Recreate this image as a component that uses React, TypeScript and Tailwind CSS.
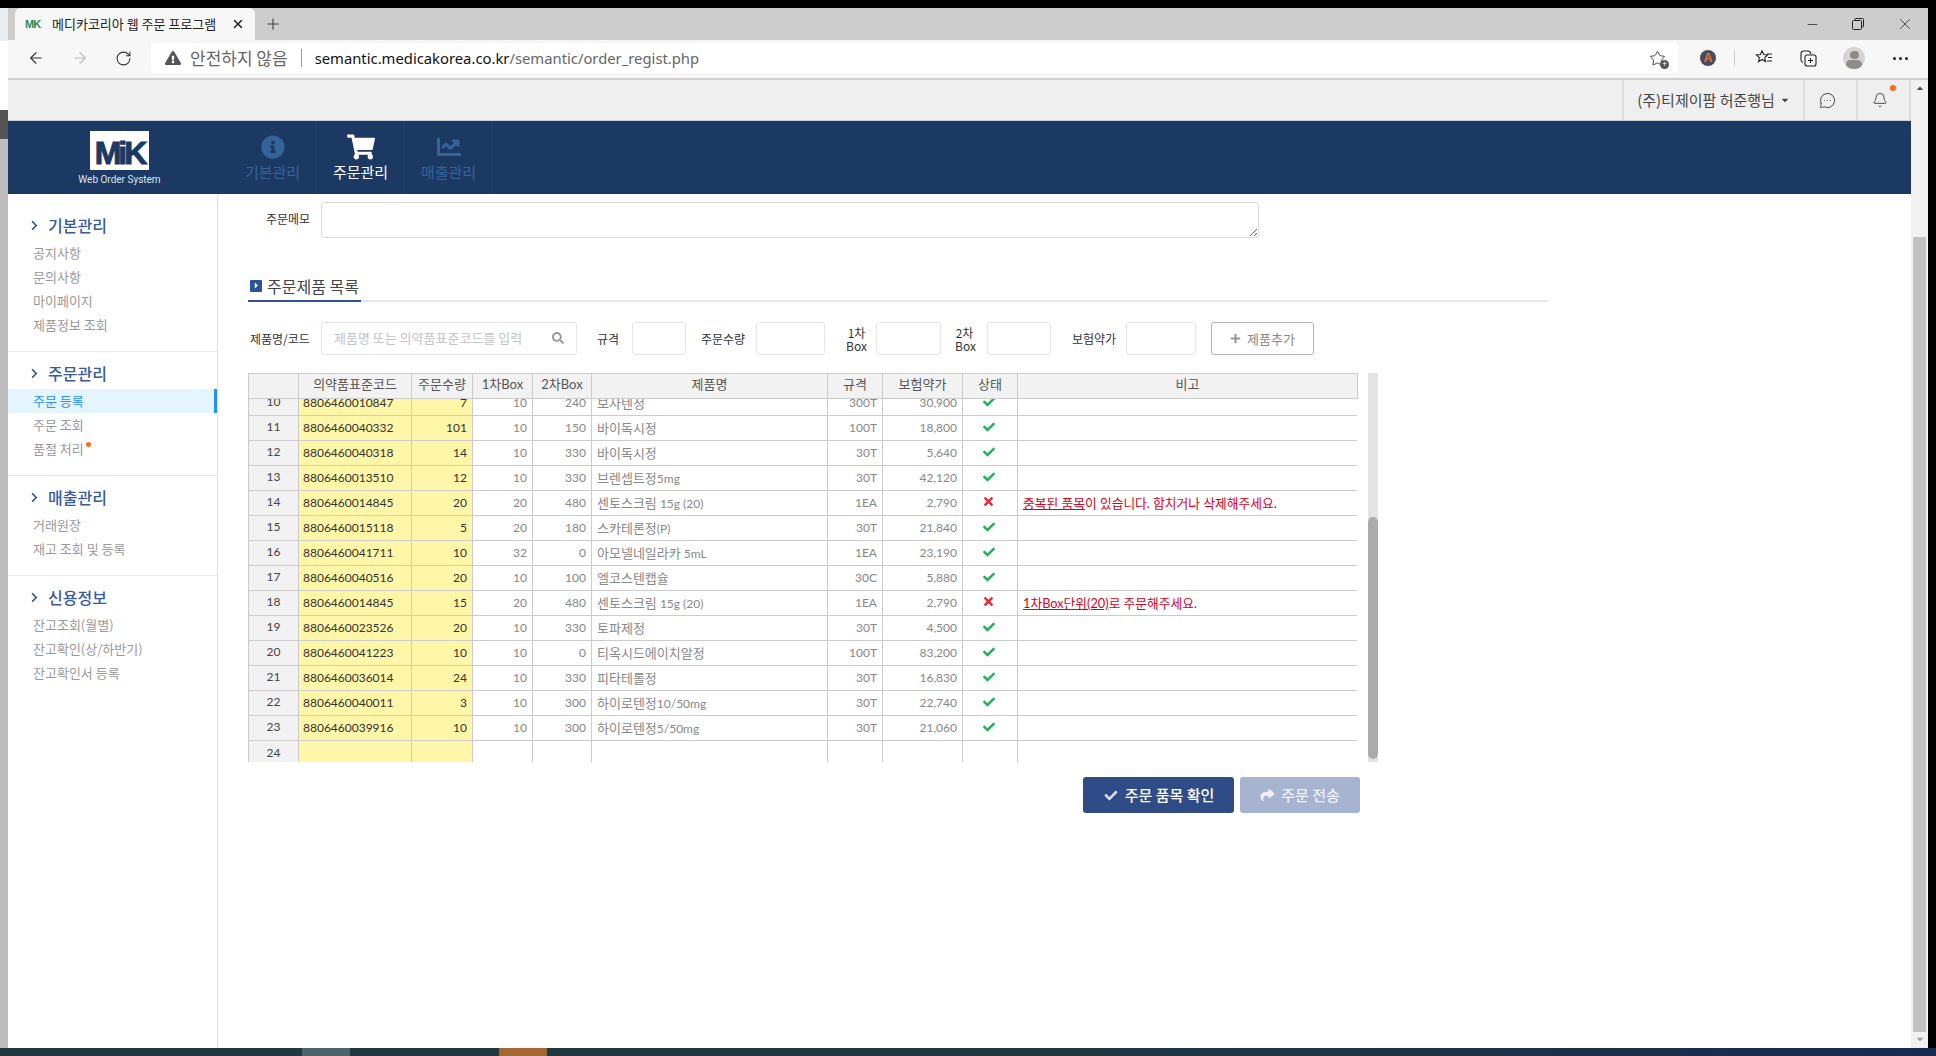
import { ArrowLeft, ArrowRight, Bell, MessageCircleMore, Minus, Plus, RotateCw, Star, X } from "lucide-react";
import { FaCaretDown, FaCaretUp, FaChartLine, FaCheck, FaChevronRight, FaExclamationTriangle, FaInfoCircle, FaPlus, FaSearch, FaShare, FaShoppingCart, FaTimes } from "react-icons/fa";

const menu = [
  { title: "기본관리", items: ["공지사항", "문의사항", "마이페이지", "제품정보 조회"] },
  { title: "주문관리", items: ["주문 등록", "주문 조회", "품절 처리"] },
  { title: "매출관리", items: ["거래원장", "재고 조회 및 등록"] },
  { title: "신용정보", items: ["잔고조회(월별)", "잔고확인(상/하반기)", "잔고확인서 등록"] },
];

const rows = [
  { no: 10, code: "8806460010847", qty: "7", box1: "10", box2: "240", name: "보사텐정", spec: "", unit: "300T", price: "30,900", ok: true },
  { no: 11, code: "8806460040332", qty: "101", box1: "10", box2: "150", name: "바이독시정", spec: "", unit: "100T", price: "18,800", ok: true },
  { no: 12, code: "8806460040318", qty: "14", box1: "10", box2: "330", name: "바이독시정", spec: "", unit: "30T", price: "5,640", ok: true },
  { no: 13, code: "8806460013510", qty: "12", box1: "10", box2: "330", name: "브렌셉트정", spec: "5mg", unit: "30T", price: "42,120", ok: true },
  { no: 14, code: "8806460014845", qty: "20", box1: "20", box2: "480", name: "센토스크림", spec: " 15g (20)", unit: "1EA", price: "2,790", ok: false, link: "중복된 품목", note: "이 있습니다. 합치거나 삭제해주세요." },
  { no: 15, code: "8806460015118", qty: "5", box1: "20", box2: "180", name: "스카테론정", spec: "(P)", unit: "30T", price: "21,840", ok: true },
  { no: 16, code: "8806460041711", qty: "10", box1: "32", box2: "0", name: "아모넬네일라카", spec: " 5mL", unit: "1EA", price: "23,190", ok: true },
  { no: 17, code: "8806460040516", qty: "20", box1: "10", box2: "100", name: "엘코스텐캡슐", spec: "", unit: "30C", price: "5,880", ok: true },
  { no: 18, code: "8806460014845", qty: "15", box1: "20", box2: "480", name: "센토스크림", spec: " 15g (20)", unit: "1EA", price: "2,790", ok: false, link: "1차Box단위(20)", note: "로 주문해주세요." },
  { no: 19, code: "8806460023526", qty: "20", box1: "10", box2: "330", name: "토파제정", spec: "", unit: "30T", price: "4,500", ok: true },
  { no: 20, code: "8806460041223", qty: "10", box1: "10", box2: "0", name: "티옥시드에이치알정", spec: "", unit: "100T", price: "83,200", ok: true },
  { no: 21, code: "8806460036014", qty: "24", box1: "10", box2: "330", name: "피타테롤정", spec: "", unit: "30T", price: "16,830", ok: true },
  { no: 22, code: "8806460040011", qty: "3", box1: "10", box2: "300", name: "하이로텐정", spec: "10/50mg", unit: "30T", price: "22,740", ok: true },
  { no: 23, code: "8806460039916", qty: "10", box1: "10", box2: "300", name: "하이로텐정", spec: "5/50mg", unit: "30T", price: "21,060", ok: true },
];

function Cols() {
  return (
    <colgroup>
      <col className="w-[50px]" />
      <col className="w-[113px]" />
      <col className="w-[61px]" />
      <col className="w-[60px]" />
      <col className="w-[59px]" />
      <col className="w-[236px]" />
      <col className="w-[55px]" />
      <col className="w-[80px]" />
      <col className="w-[55px]" />
      <col className="w-[340px]" />
    </colgroup>
  );
}

function BrowserChrome() {
  return (
    <>
      {/* 탭 */}
      <div className="h-[32px] bg-[#cdcdcd] flex items-end pl-[7px] text-[#222] relative">
        <div className="w-[240px] h-[32px] bg-[#f7f7f7] rounded-t-[6px] flex items-center pl-[10px]">
          <span className="w-[16px] text-[11px] font-bold leading-none text-[#1f8f55] tracking-[-1px] font-['Liberation_Sans',sans-serif]">MK</span>
          <span className="ml-[11px] text-[13px] whitespace-nowrap">메디카코리아 웹 주문 프로그램</span>
          <X className="ml-[15px] w-[14px] h-[14px]" strokeWidth={2.5} />
        </div>
        <Plus className="ml-[9px] mb-[7px] w-[18px] h-[18px] text-[#444]" strokeWidth={1.5} />
        <div className="ml-auto flex items-center h-[32px] pr-[14px] gap-[32px] text-[#222]">
          <Minus className="w-[15px] h-[15px]" strokeWidth={1.2} />
          <svg width="12" height="12" viewBox="0 0 12 12" fill="none" stroke="#222" strokeWidth="1">
            <rect x="0.5" y="2.5" width="9" height="9" rx="1" />
            <path d="M3 2.5V1.5a1 1 0 0 1 1-1h6.500a1 1 0 0 1 1 1V8a1 1 0 0 1-1 1h-1" />
          </svg>
          <X className="w-[18px] h-[18px]" strokeWidth={1} />
        </div>
      </div>
      {/* 주소창 */}
      <div className="h-[40px] bg-[#f7f7f7] border-b-2 border-[#cfcfcf] flex items-center text-[#333] pb-[2px]">
        <ArrowLeft className="ml-[19px] w-[18px] h-[18px]" strokeWidth={1.5} />
        <ArrowRight className="ml-[26px] w-[18px] h-[18px] text-[#bbb]" strokeWidth={1.5} />
        <RotateCw className="ml-[26px] w-[17px] h-[17px]" strokeWidth={1.5} />
        <div className="ml-[19px] w-[1527px] h-[30px] bg-white rounded-[4px] flex items-center pl-[14px]">
          <FaExclamationTriangle className="w-[16px] h-[16px] text-[#555]" />
          <span className="ml-[9px] text-[17px] text-[#666] whitespace-nowrap">안전하지 않음</span>
          <span className="ml-[13px] w-px h-[18px] bg-[#999]" />
          <span className="ml-[13px] text-[14.8px] font-['Noto_Sans',sans-serif] whitespace-nowrap text-[#666]">
            <span className="text-[#111]">semantic.medicakorea.co.kr</span>/semantic/order_regist.php
          </span>
          <div className="ml-auto mr-[12px] relative">
            <Star className="w-[17px] h-[17px] text-[#444]" strokeWidth={1.4} />
            <span className="absolute -right-[3px] -bottom-[2px] w-[9px] h-[9px] rounded-full bg-[#555] text-white text-[9px] leading-[8px] text-center">+</span>
          </div>
        </div>
        <div className="ml-[22px] w-[16px] h-[16px] rounded-full bg-[#4a4a5a] text-[#e8743b] text-[12px] font-bold leading-[16px] text-center font-['Liberation_Sans',sans-serif]">A</div>
        <span className="ml-[18px] w-px h-[16px] bg-[#ccc]" />
        <svg className="ml-[20px]" width="18" height="18" viewBox="0 0 18 18" fill="none" stroke="#222" strokeWidth="1.1">
          <path d="M7 1.800l1.700 3.700 4 .4-3 2.700.9 4-3.600-2.100-3.500 2.100.9-4-3-2.700 4-.4z" />
          <path d="M12 5h5M13 8.500h4M12 12h5" />
        </svg>
        <svg className="ml-[26px]" width="18" height="18" viewBox="0 0 18 18" fill="none" stroke="#222" strokeWidth="1.100">
          <rect x="6" y="6" width="11" height="11" rx="2" />
          <path d="M11.500 9v5M9 11.500h5" />
          <path d="M4 13.500C2.500 13 2 12 2 11V4.500C2 3 3 2 4.500 2H9c1.500 0 2.500 1 3 3" />
        </svg>
        <div className="ml-[26px] w-[22px] h-[22px] rounded-full bg-[#d6d5d2] overflow-hidden flex flex-col items-center">
          <span className="mt-[4px] w-[9px] h-[9px] rounded-full bg-[#8e8c88]" />
          <span className="mt-[1px] w-[16px] h-[10px] rounded-full bg-[#8e8c88]" />
        </div>
        <div className="ml-[28px] flex gap-[3px]">
          <span className="w-[3px] h-[3px] rounded-full bg-[#222]" />
          <span className="w-[3px] h-[3px] rounded-full bg-[#222]" />
          <span className="w-[3px] h-[3px] rounded-full bg-[#222]" />
        </div>
      </div>
    </>
  );
}

function TopBar() {
  return (
    <div className="h-[41px] shrink-0 bg-[#efefef] border-b border-[#cfcfcf] flex justify-end text-[#444]">
      <div className="w-[181px] border-l-2 border-[#dcdcdc] flex items-center justify-center gap-[5px] text-[15px] whitespace-nowrap">
        (주)티제이팜 허준행님
        <FaCaretDown className="w-[10px] h-[10px]" />
      </div>
      <div className="w-[53px] border-l-2 border-[#dcdcdc] flex items-center justify-center pr-[6px]">
        <MessageCircleMore className="w-[17px] h-[17px]" strokeWidth={1.4} />
      </div>
      <div className="w-[55px] border-x-2 border-[#dcdcdc] flex items-center justify-center relative pr-[8px]">
        <Bell className="w-[16px] h-[16px]" strokeWidth={1.4} />
        <span className="absolute top-[5px] right-[13px] w-[6px] h-[6px] rounded-full bg-[#ff6a13]" />
      </div>
    </div>
  );
}

function NavBar() {
  const items = [
    { label: "기본관리", icon: <FaInfoCircle className="w-[24px] h-[24px]" />, active: false },
    { label: "주문관리", icon: <FaShoppingCart className="w-[28px] h-[26px]" />, active: true },
    { label: "매출관리", icon: <FaChartLine className="w-[24px] h-[24px]" />, active: false },
  ];
  return (
    <div className="h-[73px] shrink-0 bg-[#1c3963] flex">
      <div className="w-[221px] shrink-0 flex flex-col items-center pt-[10px] pl-[2px]">
        <div className="w-[59px] h-[39px] bg-white flex items-center justify-center overflow-hidden pt-[5px]">
          <span className="text-[#1c3963] text-[32px] font-bold leading-none tracking-[-3px] [-webkit-text-stroke:1px_#1c3963] font-['Liberation_Sans',sans-serif]">MiK</span>
        </div>
        <span className="mt-[3px] text-[10px] leading-[14px] text-[#dfe5ee] whitespace-nowrap font-['Roboto',sans-serif]">Web Order System</span>
      </div>
      {items.map((item) => (
        <div
          key={item.label}
          className={`w-[88px] border-r border-[#1f3e6b] flex flex-col items-center pt-[12px] ${item.active ? "text-white" : "text-[#33659b]"}`}
        >
          <div className="h-[28px] flex items-center">{item.icon}</div>
          <span className="text-[15px] leading-[22px] whitespace-nowrap">{item.label}</span>
        </div>
      ))}
    </div>
  );
}

function SideBar() {
  return (
    <div className="w-[210px] shrink-0 border-r border-[#e0e0e0] bg-white">
      {menu.map((group) => (
        <div key={group.title} className="border-b border-[#e6e6e6] last:border-b-0 pt-[9px] first:pt-[19px] h-[121px] first:h-[158px] [&:nth-child(2)]:h-[124px] [&:nth-child(3)]:h-[100px]">
          <div className="flex items-center pl-[22px] h-[24px] text-[#3a5a9c]">
            <FaChevronRight className="w-[9px] h-[11px]" />
            <span className="ml-[9px] text-[16px] font-medium leading-none">{group.title}</span>
          </div>
          <ul className="mt-[4px]">
            {group.items.map((item) => (
              <li
                key={item}
                className={`h-[24px] pl-[25px] flex items-center text-[13px] whitespace-nowrap ${item === "주문 등록" ? "bg-[#e4f5fe] text-[#1e90ff] border-r-[3px] border-[#2090ff]" : "text-[#999]"}`}
              >
                {item}
                {item === "품절 처리" && <span className="ml-[2px] mb-[10px] w-[5px] h-[5px] rounded-full bg-[#ff6a13]" />}
              </li>
            ))}
          </ul>
        </div>
      ))}
    </div>
  );
}

function FilterRow() {
  const input = "h-[33px] border border-[#e4e4e4] rounded-[3px] bg-white";
  const label = "text-[12px] text-[#333] whitespace-nowrap";
  return (
    <div className="mt-[20px] h-[33px] flex items-center">
      <span className={`ml-[2px] w-[60px] ${label}`}>제품명/코드</span>
      <div className={`ml-[11px] w-[256px] flex items-center justify-between px-[12px] pb-[2px] ${input} border-[#dddddd]`}>
        <span className="text-[13px] text-[#c4c4c4] whitespace-nowrap">제품명 또는 의약품표준코드를 입력</span>
        <FaSearch className="w-[12px] h-[12px] text-[#999]" />
      </div>
      <span className={`ml-[20px] w-[22px] ${label}`}>규격</span>
      <div className={`ml-[13px] w-[54px] ${input}`} />
      <span className={`ml-[15px] w-[43px] ${label}`}>주문수량</span>
      <div className={`ml-[12px] w-[69px] ${input} border-[#dddddd]`} />
      <span className={`ml-[20px] w-[23px] text-center leading-[13px] ${label}`}>1차<br />Box</span>
      <div className={`ml-[8px] w-[65px] ${input}`} />
      <span className={`ml-[14px] w-[19px] text-center leading-[13px] ${label}`}>2차<br />Box</span>
      <div className={`ml-[13px] w-[64px] ${input}`} />
      <span className={`ml-[21px] w-[44px] ${label}`}>보험약가</span>
      <div className={`ml-[10px] w-[70px] ${input}`} />
      <button className="ml-[15px] w-[103px] h-[33px] border border-[#b5b5b5] rounded-[3px] bg-white flex items-center justify-center gap-[6px] text-[13px] text-[#888]">
        <FaPlus className="w-[11px] h-[11px] text-[#999]" />
        제품추가
      </button>
    </div>
  );
}

function OrderTable() {
  const th = "border border-[#cccccc] font-normal text-[13px] text-[#555] p-0 pb-[2px]";
  const td = "border border-[#cccccc] p-0 px-[5px] leading-none";
  const headers = ["", "의약품표준코드", "주문수량", "1차Box", "2차Box", "제품명", "규격", "보험약가", "상태", "비고"];
  return (
    <div className="mt-[18px] flex items-start">
      <div className="w-[1109px] font-['Lato','Noto_Sans_CJK_KR',sans-serif] text-[12px]">
        <table className="w-[1109px] table-fixed border-collapse">
          <Cols />
          <thead>
            <tr className="h-[25px] bg-[#f2f2f2]">
              {headers.map((h) => (
                <th key={h} className={th}>{h}</th>
              ))}
            </tr>
          </thead>
        </table>
        <div className="h-[363px] overflow-hidden">
          <table className="w-[1109px] table-fixed border-collapse -mt-[9px]">
            <Cols />
            <tbody>
              {rows.map((r) => (
                <tr key={r.no} className="h-[25px]">
                  <td className={`${td} bg-[#f2f2f2] text-center text-[#444] pb-[3px]`}>{r.no}</td>
                  <td className={`${td} pl-[4px] bg-[#fff6a8] text-[#333]`}>{r.code}</td>
                  <td className={`${td} bg-[#fff6a8] text-[#333] text-right`}>{r.qty}</td>
                  <td className={`${td} text-right text-[#888]`}>{r.box1}</td>
                  <td className={`${td} text-right text-[#888]`}>{r.box2}</td>
                  <td className={`${td} text-[#888] whitespace-nowrap`}>
                    <span className="text-[13px]">{r.name}</span>{r.spec}
                  </td>
                  <td className={`${td} text-right text-[#888]`}>{r.unit}</td>
                  <td className={`${td} text-right text-[#888]`}>{r.price}</td>
                  <td className={td}>
                    <div className="flex justify-center pb-[3px] pr-[3px]">
                      {r.ok ? <FaCheck className="w-[14px] h-[12px] text-[#1fb254]" /> : <FaTimes className="w-[11px] h-[13px] text-[#dd2c3a]" />}
                    </div>
                  </td>
                  <td className={`${td} text-[12.75px] text-[#d9001b] whitespace-nowrap`}>
                    {r.link && <span className="underline">{r.link}</span>}
                    {r.note}
                  </td>
                </tr>
              ))}
              <tr className="h-[25px]">
                <td className={`${td} bg-[#f2f2f2] text-center text-[#444]`}>24</td>
                <td className={`${td} bg-[#fff6a8]`} />
                <td className={`${td} bg-[#fff6a8]`} />
                <td className={td} />
                <td className={td} />
                <td className={td} />
                <td className={td} />
                <td className={td} />
                <td className={td} />
                <td className={td} />
              </tr>
            </tbody>
          </table>
        </div>
      </div>
      <div className="ml-[11px] w-[10px] h-[389px] bg-[#e3e3e3] flex flex-col justify-end pb-[3px]">
        <div className="h-[242px] bg-[#ababab] rounded-[5px]" />
      </div>
    </div>
  );
}

export default function App() {
  return (
    <div className="w-[1936px] h-[1056px] overflow-hidden bg-black font-['Noto_Sans_CJK_KR','Noto_Sans',sans-serif] flex flex-col pt-[8px]">
      <div className="h-[1040px] flex">
        <div className="w-[8px] flex flex-col">
          <div className="h-[33px] bg-[#e8eef2]" />
          <div className="h-[69px] bg-white" />
          <div className="h-[29px] bg-[#555555]" />
          <div className="flex-1 bg-[#bdbdbd]" />
        </div>
        <div className="w-[1920px] flex flex-col bg-white">
          <BrowserChrome />
          <div className="flex-1 min-h-0 flex">
            <div className="w-[1903px] flex flex-col">
              <TopBar />
              <NavBar />
              <div className="flex-1 min-h-0 flex">
                <SideBar />
                <div className="pl-[30px] w-[1330px]">
                  {/* 주문메모 */}
                  <div className="mt-[8px] flex items-center">
                    <span className="ml-[18px] w-[44px] text-[12px] text-[#333] whitespace-nowrap pb-[2px]">주문메모</span>
                    <textarea className="ml-[11px] w-[938px] h-[36px] border border-[#dddddd] rounded-[3px] bg-white" />
                  </div>
                  {/* 주문제품 목록 */}
                  <div className="mt-[35px] h-[29px] border-b-2 border-[#e8e8e8] w-[1300px]">
                    <div className="w-[113px] h-[29px] border-b-2 border-[#2a549c] flex items-center pl-[2px] pb-[2px]">
                      <span className="w-[12px] h-[12px] bg-[#2a549c] rounded-[1px] flex items-center justify-center">
                        <FaCaretUp className="w-[9px] h-[9px] text-white rotate-90" />
                      </span>
                      <span className="ml-[5px] text-[16px] text-[#444] whitespace-nowrap">주문제품 목록</span>
                    </div>
                  </div>
                  <FilterRow />
                  <OrderTable />
                  <div className="mt-[15px] w-[1112px] flex justify-end gap-[6px]">
                    <button className="w-[151px] h-[36px] bg-[#304c87] rounded-[3px] flex items-center justify-center gap-[6px] text-[15px] font-medium text-white">
                      <FaCheck className="w-[16px] h-[13px] text-[#d5dbe8]" />
                      주문 품목 확인
                    </button>
                    <button className="w-[120px] h-[36px] bg-[#a6b3d1] rounded-[3px] flex items-center justify-center gap-[6px] text-[15px] font-medium text-[#eef1f7]">
                      <FaShare className="w-[15px] h-[14px]" />
                      주문 전송
                    </button>
                  </div>
                </div>
              </div>
            </div>
            {/* 페이지 스크롤바 */}
            <div className="w-[17px] bg-[#f1f1f1] flex flex-col items-center">
              <FaCaretUp className="mt-[3px] w-[10px] h-[10px] text-[#505050]" />
              <div className="mt-[144px] w-[13px] h-[795px] bg-[#c1c1c1]" />
              <FaCaretDown className="mt-[2px] w-[10px] h-[10px] text-[#a0a0a0]" />
            </div>
          </div>
        </div>
        <div className="w-[8px] bg-black" />
      </div>
      {/* 작업표시줄 */}
      <div className="h-[8px] flex bg-gradient-to-r from-[#20393f] via-[#20393f] to-[#182a50]">
        <div className="ml-[302px] w-[48px] bg-[#4d626a]" />
        <div className="ml-[149px] w-[48px] bg-[#a5662f]" />
      </div>
    </div>
  );
}
